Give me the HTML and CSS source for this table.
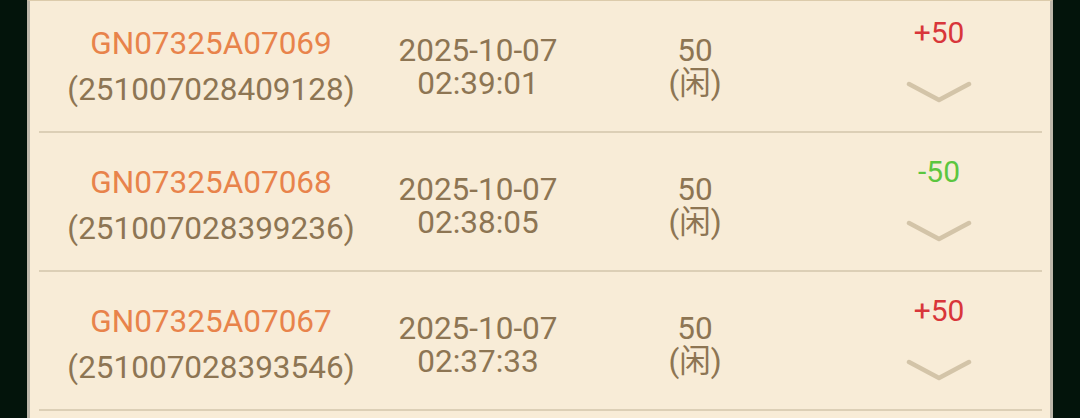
FILE: index.html
```html
<!DOCTYPE html>
<html lang="zh">
<head>
<meta charset="utf-8">
<link rel="stylesheet" href="styles.css">
</head>
<body>
<div class="panel">
  <div class="list">
    <div class="row">
      <div class="col c1"><div class="no">GN07325A07069</div><div class="id">(251007028409128)</div></div>
      <div class="col c2"><div>2025-10-07</div><div>02:39:01</div></div>
      <div class="col c3"><div>50</div><div>(闲)</div></div>
      <div class="col c4"><div class="amt win">+50</div><svg class="chev" width="66" height="24" viewBox="0 0 66 24"><polyline points="3,4 33,20 63,4" fill="none" stroke="#d3c4a8" stroke-width="4.5" stroke-linecap="round" stroke-linejoin="round"/></svg></div>
    </div>
    <div class="row">
      <div class="col c1"><div class="no">GN07325A07068</div><div class="id">(251007028399236)</div></div>
      <div class="col c2"><div>2025-10-07</div><div>02:38:05</div></div>
      <div class="col c3"><div>50</div><div>(闲)</div></div>
      <div class="col c4"><div class="amt lose">-50</div><svg class="chev" width="66" height="24" viewBox="0 0 66 24"><polyline points="3,4 33,20 63,4" fill="none" stroke="#d3c4a8" stroke-width="4.5" stroke-linecap="round" stroke-linejoin="round"/></svg></div>
    </div>
    <div class="row">
      <div class="col c1"><div class="no">GN07325A07067</div><div class="id">(251007028393546)</div></div>
      <div class="col c2"><div>2025-10-07</div><div>02:37:33</div></div>
      <div class="col c3"><div>50</div><div>(闲)</div></div>
      <div class="col c4"><div class="amt win">+50</div><svg class="chev" width="66" height="24" viewBox="0 0 66 24"><polyline points="3,4 33,20 63,4" fill="none" stroke="#d3c4a8" stroke-width="4.5" stroke-linecap="round" stroke-linejoin="round"/></svg></div>
    </div>
  </div>
</div>
</body>
</html>
```
FILE: styles.css
```css
* { box-sizing: border-box; }
html, body {
  margin: 0;
  height: 100%;
  overflow: hidden;
}
body {
  background: #03140b;
  font-family: Roboto, "Noto Sans CJK SC", sans-serif;
  color: #8d7553;
}
.panel {
  margin-left: 27px;
  width: 1026px;
  height: 418px;
  background: #f8ecd7;
  border-left: 3px solid #bdb7aa;
  border-right: 3px solid #bdb7aa;
  border-top: 1px solid #dccbab;
  overflow: hidden;
}
.list {
  margin: -7px 8px 0 9px;
}
.row {
  display: grid;
  grid-template-columns: 344px 190px 244px 225px;
  align-items: center;
  height: 139px;
  padding-top: 8px;
  border-bottom: 2px solid #dccfb6;
}
.col {
  display: flex;
  flex-direction: column;
  align-items: center;
  text-align: center;
  font-size: 31.5px;
}
.c1 { line-height: 46px; }
.c1 .no { color: #e8834b; }
.c2, .c3 { line-height: 33px; }
.c4 {
  padding-left: 19px;
  margin-top: -12px;
}
.amt {
  font-size: 30px;
  line-height: 30px;
}
.win { color: #d8363a; }
.lose { color: #5cc63f; }
.chev {
  display: block;
  margin-top: 32px;
  filter: blur(0.7px);
}
```
